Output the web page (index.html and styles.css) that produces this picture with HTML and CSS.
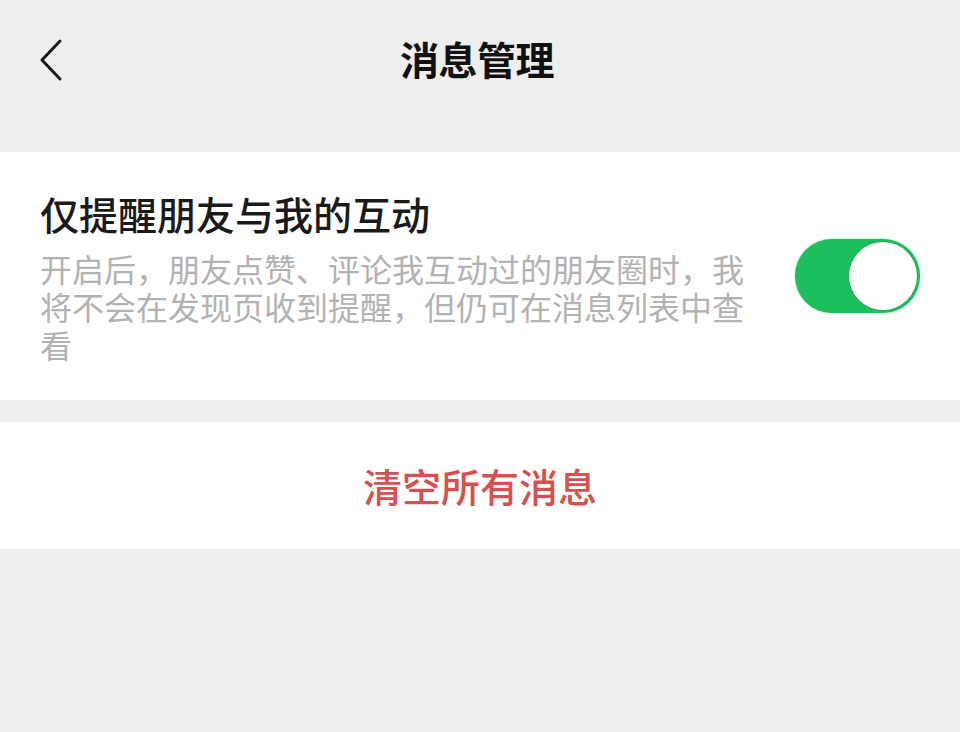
FILE: index.html
```html
<!DOCTYPE html>
<html lang="zh-CN">
<head>
<meta charset="utf-8">
<link rel="stylesheet" href="styles.css">
</head>
<body>
<div class="page">
  <header class="nav">
    <span class="back">
      <svg width="30" height="50" viewBox="0 0 30 50"><polyline points="22,6 4,25 22,44" fill="none" stroke="#1a1a1a" stroke-width="3" stroke-linecap="round" stroke-linejoin="round"/></svg>
    </span>
    <h1 class="nav-title">消息管理</h1>
  </header>
  <section class="card setting">
    <div class="setting-text">
      <div class="setting-title">仅提醒朋友与我的互动</div>
      <div class="setting-desc">开启后，朋友点赞、评论我互动过的朋友圈时，我将不会在发现页收到提醒，但仍可在消息列表中查看</div>
    </div>
    <div class="toggle"><div class="knob"></div></div>
  </section>
  <section class="card action">
    <span class="danger">清空所有消息</span>
  </section>
</div>
</body>
</html>
```
FILE: styles.css
```css
html, body {
  margin: 0;
  padding: 0;
  background: #eeeeee;
}
body {
  font-family: "Noto Sans CJK SC", "Noto Sans", sans-serif;
  width: 960px;
  height: 732px;
  overflow: hidden;
}
.page {
  display: flex;
  flex-direction: column;
}
.nav {
  height: 116px;
  display: flex;
  align-items: center;
  justify-content: center;
  position: relative;
  margin-bottom: 36px;
}
.back {
  position: absolute;
  left: 38px;
  top: 35px;
  display: flex;
}
.nav-title {
  margin: 0;
  font-size: 39px;
  font-weight: 700;
  color: #111;
  line-height: 48px;
  letter-spacing: -0.5px;
  margin-left: -6px;
}
.card {
  background: #fff;
}
.setting {
  display: flex;
  align-items: center;
  padding: 37px 40px 37px 40px;
  height: 174px;
}
.setting-text {
  width: 720px;
  margin-right: 35px;
}
.setting-title {
  font-size: 39px;
  line-height: 48px;
  color: #1a1a1a;
  font-weight: 500;
}
.setting-desc {
  margin-top: 12px;
  font-size: 32px;
  line-height: 38px;
  color: #b2b2b2;
}
.toggle {
  width: 125px;
  height: 74px;
  border-radius: 37px;
  background: #1dbf5c;
  box-sizing: border-box;
  padding: 3px;
  display: flex;
  justify-content: flex-end;
  align-items: center;
  box-shadow: 0 0 2px rgba(30, 192, 92, 0.6);
}
.knob {
  width: 68px;
  height: 68px;
  border-radius: 50%;
  background: #fff;
  box-shadow: 0 0 0 1px #2ba35c;
}
.action {
  margin-top: 22px;
  height: 127px;
  display: flex;
  align-items: center;
  justify-content: center;
}
.danger {
  font-size: 39px;
  line-height: 48px;
  color: #d6504f;
  font-weight: 500;
  margin-top: -2px;
}
```
